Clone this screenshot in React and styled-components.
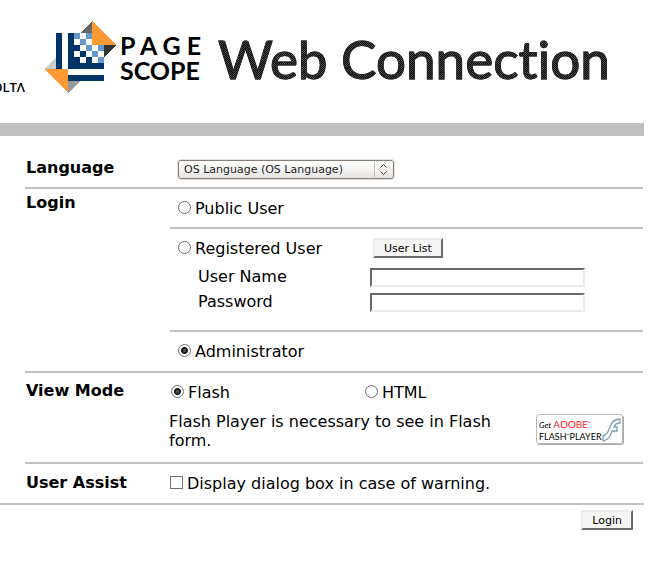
import React from "react";
import styled, { createGlobalStyle } from "styled-components";

const RULE = "#c0c0c0";

const GlobalStyle = createGlobalStyle`
  * { box-sizing: border-box; }
  body {
    margin: 0;
    background: #fff;
    color: #000;
    font: 16px/19px "DejaVu Sans", sans-serif;
  }
`;

const Page = styled.main`
  padding-bottom: 36px;
`;

const Masthead = styled.header`
  display: flex;
  align-items: flex-start;
  height: 123px;
  padding-top: 21px;
  overflow: hidden;
  white-space: nowrap;
`;

const Maker = styled.div`
  display: flex;
  justify-content: flex-end;
  flex: none;
  width: 25px;
  margin: 58px 19px 0 0;
  overflow: hidden;
  font: 13px/16px "Open Sans", sans-serif;
  font-weight: 600;
`;

const Emblem = styled.svg`
  flex: none;
  width: 72px;
  height: 72px;
`;

const Brand = styled.div`
  flex: none;
  width: 102px;
  padding: 12px 0 0 4px;
  font: 700 25px/25px Lato, sans-serif;
`;

const Product = styled.h1`
  margin: 0;
  font: 400 53px/76px Lato, sans-serif;
  font-variant-ligatures: none;
  color: transparent;
  background: repeating-conic-gradient(#000 0 25%, #4c4848 0 50%) 0 0 / 2px 2px;
  background-clip: text;
  -webkit-text-stroke: 1px #2a2727;
`;

const Band = styled.div`
  height: 13px;
  margin-right: 25px;
  background: ${RULE};
`;

const Form = styled.form`
  margin-right: 25px;
`;

const Section = styled.section`
  display: grid;
  grid-template-columns: 145px 1fr;
  margin: 0 1px 0 25px;
  border-bottom: ${(p) => (p.$last ? 0 : 2)}px solid ${RULE};
`;

const Heading = styled.h2`
  margin: 0;
  padding: ${(p) => p.$top}px 0 0 1px;
  font-size: 16px;
  line-height: 19px;
`;

const LanguageCell = styled.div`
  padding: 24px 0 8px 8px;
`;

const SelectWrap = styled.div`
  position: relative;
  width: 216px;
  height: 19px;
`;

const Select = styled.select`
  display: block;
  appearance: none;
  width: 100%;
  height: 100%;
  padding: 0 24px 0 5px;
  border: 1px solid #867d76;
  border-radius: 3px;
  background: linear-gradient(#fff, #f4f3f2 50%, #e6e4e2);
  box-shadow: 0 0 0 1px #e2dfdc;
  color: #1e1e1e;
  font: 11px "DejaVu Sans", sans-serif;
`;

const Arrows = styled.svg`
  position: absolute;
  top: 2px;
  right: 4px;
  width: 16px;
  height: 15px;
  pointer-events: none;
`;

const Panel = styled.div`
  border-bottom: ${(p) => (p.$last ? 0 : 2)}px solid ${RULE};
`;

const Line = styled.div`
  display: grid;
  grid-template-columns: ${(p) => (p.$first ? `${p.$first}px 1fr` : "1fr")};
  align-items: center;
  height: ${(p) => (p.$tall ? 39 : 38)}px;
  padding-left: ${(p) => p.$indent}px;
`;

const Choice = styled.label`
  display: flex;
  align-items: center;
  gap: 4px;
`;

const Radio = styled.input.attrs({ type: "radio" })`
  appearance: none;
  flex: none;
  width: 13px;
  height: 13px;
  margin: 0 0 2px;
  border: 1px solid #6f6f6f;
  border-radius: 50%;
  background: #fff;
  &:checked {
    background: radial-gradient(circle at 50% 50%, #555 0 1px, #1c1c1c 2px 3px, #fff 4px);
  }
`;

const Check = styled.input.attrs({ type: "checkbox" })`
  appearance: none;
  flex: none;
  width: 13px;
  height: 13px;
  margin: 0 0 2px;
  border: 1px solid #77716b;
  background: #fff;
  &:checked { background: #333; }
`;

const Button = styled.button`
  justify-self: start;
  height: 20px;
  padding: 0 9px;
  border: 2px solid;
  border-color: #ebebeb #69696b #69696b #ebebeb;
  background: #f5f5f3;
  color: #000;
  font: 11px "DejaVu Sans", sans-serif;
`;

const Credentials = styled.div`
  display: grid;
  grid-template-columns: 172px 215px;
  row-gap: 6px;
  padding: 1px 0 18px 28px;
`;

const FieldLabel = styled.label`
  line-height: 17px;
`;

const Field = styled.input`
  width: 100%;
  height: 19px;
  padding: 0 2px;
  border: 2px solid;
  border-color: #69696b #ebebeb #ebebeb #69696b;
  background: #fff;
  font: 13px "DejaVu Sans", sans-serif;
`;

const FlashNote = styled.div`
  display: flex;
  justify-content: space-between;
  align-items: flex-start;
  margin-left: -1px;
  padding: 1px 19px 12px 0;
`;

const Note = styled.p`
  width: 330px;
  margin: 0;
`;

const Badge = styled.a`
  display: flex;
  justify-content: space-between;
  width: 87px;
  height: 30px;
  margin: 2px 1px 0 0;
  padding: 3px 1px 0 2px;
  border: 1px solid #b8b8b8;
  border-radius: 3px;
  box-shadow: 1px 1px 0 #a8a8a8;
  color: #000;
  text-decoration: none;
  white-space: nowrap;
`;

const BadgeText = styled.span`
  width: 63px;
  font: 9px/12px Lato, sans-serif;
  -webkit-text-stroke: 0;
  em { font-size: 8px; }
  b { color: #f22; font-weight: 400; font-size: 10px; }
`;

const Mark = styled.span`
  font-size: 4px;
  line-height: 5px;
  vertical-align: 3px;
`;

const FlashMark = styled.svg`
  flex: none;
  width: 19px;
  height: 24px;
`;

const Actions = styled.div`
  display: flex;
  justify-content: flex-end;
  padding: 5px 11px 0 0;
  border-top: 2px solid ${RULE};
`;

const whites = [[36, 12], [30, 18], [42, 18], [36, 24], [48, 24], [30, 30], [42, 30], [54, 30], [36, 36], [48, 36]];
const blues = [[30, 12], [42, 12], [36, 18], [42, 24], [54, 24], [48, 30], [54, 36]];

function PageScopeEmblem() {
  return (
    <Emblem viewBox="0 0 72 72" shapeRendering="crispEdges" aria-hidden="true">
      <path fill="#ccc" d="M0 48 12 36V48z" />
      <path fill="#666" d="M48 0 36 12H48z" />
      <path fill="#333" d="M72 24 60 36V24z" />
      <path fill="#999" d="M24 72 36 60H24z" />
      <path fill="#036" d="M12 12h6v36h-6zM24 12h36v36H24zM24 54h36v6H24z" />
      {whites.map(([x, y]) => <rect key={`${x}-${y}`} x={x} y={y} width="6" height="6" fill="#fff" />)}
      {blues.map(([x, y]) => <rect key={`${x}-${y}`} x={x} y={y} width="6" height="6" fill="#69c" />)}
      <path fill="#f93" d="M48 0 72 24H48zM0 48H24V72z" />
    </Emblem>
  );
}

export default function App() {
  return (
    <Page>
      <GlobalStyle />
      <Masthead>
        <Maker>OLTΛ</Maker>
        <PageScopeEmblem />
        <Brand>P A G E<br />SCOPE</Brand>
        <Product>Web Connection</Product>
      </Masthead>
      <Band />
      <Form onSubmit={(e) => e.preventDefault()}>
        <Section>
          <Heading $top={22}><label htmlFor="language">Language</label></Heading>
          <LanguageCell>
            <SelectWrap>
              <Select id="language"><option>OS Language (OS Language)</option></Select>
              <Arrows viewBox="0 0 16 15" fill="none" aria-hidden="true">
                <path d="M.5 0V15" stroke="#c4bfba" />
                <path d="M6.500 5.500 9.500 2.500 12.500 5.500M6.500 9.500 9.500 12.500 12.500 9.500" stroke="#444" />
              </Arrows>
            </SelectWrap>
          </LanguageCell>
        </Section>

        <Section>
          <Heading $top={4}>Login</Heading>
          <div>
            <Panel>
              <Line $first={195} $indent={8}>
                <Choice><Radio name="user" />Public User</Choice>
              </Line>
            </Panel>
            <Panel>
              <Line $first={195} $indent={8}>
                <Choice><Radio name="user" />Registered User</Choice>
                <Button type="button">User List</Button>
              </Line>
              <Credentials>
                <FieldLabel htmlFor="username">User Name</FieldLabel>
                <Field id="username" type="text" />
                <FieldLabel htmlFor="password">Password</FieldLabel>
                <Field id="password" type="password" />
              </Credentials>
            </Panel>
            <Panel $last>
              <Line $tall $first={195} $indent={8}>
                <Choice><Radio name="user" defaultChecked />Administrator</Choice>
              </Line>
            </Panel>
          </div>
        </Section>

        <Section>
          <Heading $top={8}>View Mode</Heading>
          <div>
            <Line $first={194} $indent={1}>
              <Choice><Radio name="mode" defaultChecked />Flash</Choice>
              <Choice><Radio name="mode" />HTML</Choice>
            </Line>
            <FlashNote>
              <Note>Flash Player is necessary to see in Flash form.</Note>
              <Badge href="#flash">
                <BadgeText><em>Get</em> <b>ADOBE<Mark>™</Mark></b><br />FLASH<Mark>™</Mark>PLAYER</BadgeText>
                <FlashMark viewBox="0 0 19 24" fill="#fff" stroke="#7c9db5" aria-hidden="true">
                  <path strokeWidth="1.3" d="M18 1V5C15 5 13 6 12 9H15V13H10C8 19 6 22 1 23V18C5 17 6 14 8 9C10 3 13 1 18 1Z" />
                </FlashMark>
              </Badge>
            </FlashNote>
          </div>
        </Section>

        <Section $last>
          <Heading $top={9}>User Assist</Heading>
          <Line $tall $indent={0}>
            <Choice><Check />Display dialog box in case of warning.</Choice>
          </Line>
        </Section>
        <Actions><Button type="submit">Login</Button></Actions>
      </Form>
    </Page>
  );
}
